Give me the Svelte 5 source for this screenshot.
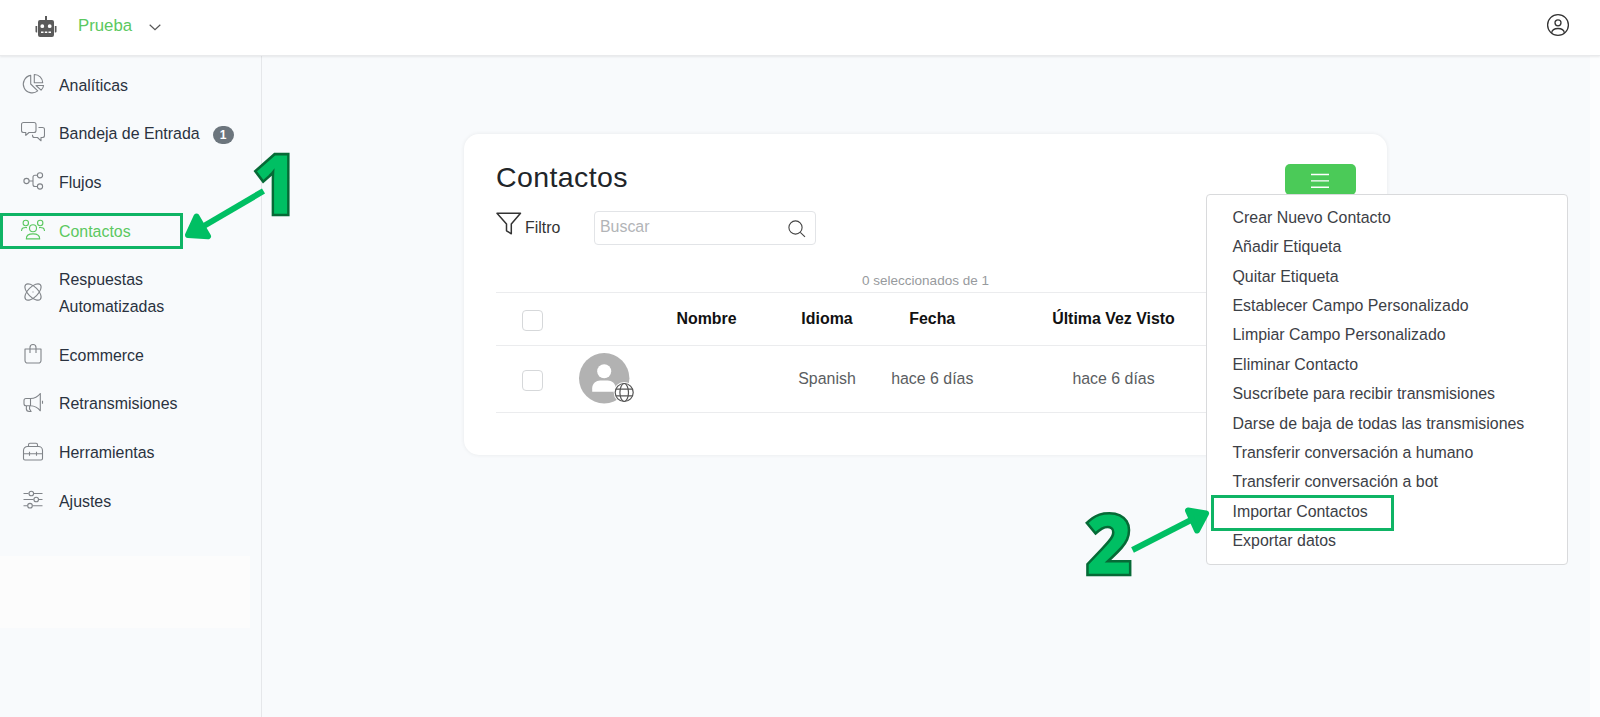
<script>
    let botName = 'Prueba';
    let search = '';

    const navItems = [
        { label: 'Analíticas', icon: 'chart' },
        { label: 'Bandeja de Entrada', icon: 'chat', badge: 1 },
        { label: 'Flujos', icon: 'flow' },
        { label: 'Contactos', icon: 'users', active: true },
        { label: 'Respuestas Automatizadas', icon: 'atom' },
        { label: 'Ecommerce', icon: 'bag' },
        { label: 'Retransmisiones', icon: 'horn' },
        { label: 'Herramientas', icon: 'case' },
        { label: 'Ajustes', icon: 'sliders' },
    ];

    const actions = [
        'Crear Nuevo Contacto',
        'Añadir Etiqueta',
        'Quitar Etiqueta',
        'Establecer Campo Personalizado',
        'Limpiar Campo Personalizado',
        'Eliminar Contacto',
        'Suscríbete para recibir transmisiones',
        'Darse de baja de todas las transmisiones',
        'Transferir conversación a humano',
        'Transferir conversación a bot',
        'Importar Contactos',
        'Exportar datos',
    ];

    let contacts = [
        { name: '', language: 'Spanish', date: 'hace 6 días', lastSeen: 'hace 6 días' },
    ];
</script>

<div class="page">
    <header class="topbar">
        <svg class="robot" width="22" height="22" viewBox="0 0 22 22">
            <path fill="#5a5a5a" fill-rule="evenodd" d="M10 0h2v4h5a2 2 0 0 1 2 2v13a2 2 0 0 1-2 2H5a2 2 0 0 1-2-2V6a2 2 0 0 1 2-2h5zM7.3 8.3a1.9 1.9 0 1 0 0 3.8 1.9 1.9 0 0 0 0-3.8zM14.7 8.3a1.9 1.9 0 1 0 0 3.8 1.9 1.9 0 0 0 0-3.8zM6 15.5v1.6h2.5v-1.6zM9.8 15.5v1.6h2.5v-1.6zM13.5 15.5v1.6H16v-1.6zM.5 10h1.7v6.5H1.5a1 1 0 0 1-1-1zM19.8 10h1.7v5.5a1 1 0 0 1-1 1h-.7z" />
        </svg>
        <span class="bot-name">{botName}</span>
        <svg class="chevron" width="12" height="7" viewBox="0 0 12 7"><path d="M.7 .8 6 5.6 11.3 .8" /></svg>
        <svg class="account" width="24" height="24" viewBox="0 0 24 24">
            <circle cx="12" cy="12" r="10.4" />
            <circle cx="12" cy="9.8" r="3" />
            <path d="M5.6 19.8c.5-3 3-4.3 6.4-4.3s5.9 1.3 6.4 4.3" />
        </svg>
    </header>

    <div class="body">
        <nav class="sidebar">
            {#each navItems as item}
                <a href="#top" class="nav-item" class:active={item.active}>
                    <svg class="nav-icon" width="24" height="24" viewBox="0 0 24 24">
                        {#if item.icon === 'chart'}
                            <path d="M9.7 3.4A8.8 8.8 0 1 0 16.7 18.9L9.7 12zM13.3 2.5v8.2h8.4A8.3 8.3 0 0 0 13.3 2.5zM15 13.5h7.6a8 8 0 0 1-2.5 4.7z" />
                        {:else if item.icon === 'chat'}
                            <path d="M2.5 1.5h10.5a2 2 0 0 1 2 2v6a2 2 0 0 1-2 2H8l-3.2 2.8V11.5H2.5a2 2 0 0 1-2-2V3.5a2 2 0 0 1 2-2z" />
                            <path d="M17.5 6.5h4a2 2 0 0 1 2 2v6a2 2 0 0 1-2 2h-1.5v3.3L16.5 16.5h-3a2 2 0 0 1-2-2v-.7" />
                        {:else if item.icon === 'flow'}
                            <circle cx="5.5" cy="12" r="2.6" />
                            <circle cx="19" cy="6.3" r="2.6" />
                            <circle cx="19" cy="17.5" r="2.6" />
                            <path d="M8 12h4M16.4 6.3H14a2 2 0 0 0-2 2v7.2a2 2 0 0 0 2 2h2.4" />
                        {:else if item.icon === 'users'}
                            <circle cx="12" cy="10.3" r="3.5" />
                            <circle cx="4.8" cy="5" r="2.7" />
                            <circle cx="19.2" cy="5" r="2.7" />
                            <path d="M5.3 20.9c0-3.6 2-5 6.7-5s6.7 1.4 6.7 5zM.5 13c.2-3 1.7-3.7 5.5-3.4M23.5 13c-.2-3-1.7-3.7-5.5-3.4" />
                        {:else if item.icon === 'atom'}
                            <ellipse cx="12" cy="12" rx="10.3" ry="5" transform="rotate(45 12 12)" />
                            <ellipse cx="12" cy="12" rx="10.3" ry="5" transform="rotate(-45 12 12)" />
                            <path d="M11.5 12h1" />
                        {:else if item.icon === 'bag'}
                            <path d="M4 7h16v11.5a2.5 2.5 0 0 1-2.5 2.5h-11A2.5 2.5 0 0 1 4 18.5zM9 11V5.5a3 3 0 0 1 6 0V11" />
                        {:else if item.icon === 'horn'}
                            <path d="M9.5 7.5H5A2 2 0 0 0 3 9.5v3.2a2 2 0 0 0 2 2h4.5zM9.5 7.5c4 0 7.5-2 9.8-5v17.3c-2.3-3-5.8-5-9.8-5.1M5.5 15l-.2 2.5c0 2 1.2 3 3 3h1.8l-1.6-2.6.2-2.9M21.5 9.8v3" />
                        {:else if item.icon === 'case'}
                            <path d="M6.5 6.5h11a4 4 0 0 1 4 4v8a1.5 1.5 0 0 1-1.5 1.5H4a1.5 1.5 0 0 1-1.5-1.5v-8a4 4 0 0 1 4-4zM7.5 6.5V4.8a1.5 1.5 0 0 1 1.5-1.5h6a1.5 1.5 0 0 1 1.5 1.5v1.7M2.5 13.8h19M8.5 11.8v4M15.5 11.8v4" />
                        {:else}
                            <path d="M2.5 5.5h5M12.5 5.5h9M2.5 11.5h10M17.5 11.5h4M2.5 17.7h4M11.5 17.7h10" />
                            <circle cx="10.3" cy="5.5" r="2.3" />
                            <circle cx="15.2" cy="11.5" r="2.3" />
                            <circle cx="9" cy="17.7" r="2.3" />
                        {/if}
                    </svg>
                    <span class="nav-label">{item.label}</span>
                    {#if item.badge}
                        <span class="badge">{item.badge}</span>
                    {/if}
                </a>
            {/each}
            <div class="nav-footer"></div>
        </nav>

        <main class="content">
            <section class="card">
                <div class="card-head">
                    <h1>Contactos</h1>
                    <div class="dropdown">
                        <button class="menu-btn" aria-label="Menu">
                            <svg width="18" height="16" viewBox="0 0 18 16"><path d="M0 1.5h18M0 7.9h18M0 14.3h18" /></svg>
                        </button>
                        <ul class="menu">
                            {#each actions as action}
                                <li>{action}</li>
                            {/each}
                        </ul>
                    </div>
                </div>

                <div class="tools">
                    <svg class="funnel" width="26" height="24" viewBox="0 0 26 24"><path d="M1 1.2h23.5L15.3 12v9.8l-4.8-3V12z" /></svg>
                    <span class="filter">Filtro</span>
                    <div class="search">
                        <input type="text" placeholder="Buscar" bind:value={search}>
                        <svg width="18" height="18" viewBox="0 0 18 18"><circle cx="7.5" cy="7.5" r="6.6" /><path d="M12.3 12.3l4.7 4.5" /></svg>
                    </div>
                </div>

                <p class="selected">0 seleccionados de {contacts.length}</p>

                <table>
                    <thead>
                        <tr>
                            <th class="w-check"><span class="checkbox"></span></th>
                            <th class="w-avatar"></th>
                            <th class="w-name">Nombre</th>
                            <th class="w-lang">Idioma</th>
                            <th class="w-date">Fecha</th>
                            <th class="w-seen">Última Vez Visto</th>
                            <th></th>
                        </tr>
                    </thead>
                    <tbody>
                        {#each contacts as contact}
                            <tr>
                                <td><span class="checkbox"></span></td>
                                <td>
                                    <svg class="avatar" width="56" height="52" viewBox="0 0 56 52">
                                        <circle cx="25.2" cy="25.3" r="25.2" fill="#b2b2b2" />
                                        <circle cx="25.2" cy="18.3" r="7" fill="#fff" />
                                        <path d="M13.2 38.8v-3.5c0-5 4-7.8 8-7.8h7.5c4 0 8 2.8 8 7.8V38.8z" fill="#fff" />
                                        <circle cx="45.2" cy="39.5" r="10.5" fill="#fff" />
                                        <g fill="none" stroke="#555" stroke-width="1.2">
                                            <circle cx="45.2" cy="39.5" r="9" />
                                            <ellipse cx="45.2" cy="39.5" rx="4.3" ry="9" />
                                            <path d="M37 36.1h16.4M37 42.9h16.4" />
                                        </g>
                                    </svg>
                                </td>
                                <td>{contact.name}</td>
                                <td>{contact.language}</td>
                                <td>{contact.date}</td>
                                <td>{contact.lastSeen}</td>
                                <td></td>
                            </tr>
                        {/each}
                    </tbody>
                </table>
            </section>
        </main>
    </div>

    <!-- tutorial marks, drawn above the page -->
    <div class="mark mark-nav"></div>
    <div class="mark mark-import"></div>
    <svg class="guide" width="1600" height="717" viewBox="0 0 1600 717">
        <g class="arrow">
            <path d="M263.5 191 203 226.5" />
            <path class="head" d="M188 235 196.5 216.5 208 236.3z" />
            <path d="M1132.5 550 1192 519.5" />
            <path class="head" d="M1206 513.5 1188 510.5 1197 530.5z" />
        </g>
        <text transform="translate(252 215) scale(.93 1)">1</text>
        <text transform="translate(1085 574.5) scale(.97 1)">2</text>
    </svg>
</div>

<style>
    :global(body) {
        background: #f8fafc;
    }

    .page {
        position: relative;
        height: 717px;
        overflow: hidden;
        display: flex;
        flex-direction: column;
        font-family: "Liberation Sans", Arial, sans-serif;
        font-size: 15.92px;
        color: #212529;
    }

    svg {
        flex: none;
        fill: none;
    }

    .topbar {
        height: 56px;
        box-sizing: border-box;
        display: flex;
        align-items: center;
        padding: 0 30px 4px 35px;
        background: #fff;
        border-bottom: 1px solid #e9eaec;
        box-shadow: 0 1px 2px rgba(0, 0, 0, 0.08);
        z-index: 1;
    }

    .robot {
        margin-top: 3px;
    }

    .bot-name {
        margin-left: 21px;
        color: #5bc860;
        font-size: 16.8px;
    }

    .chevron {
        margin: 3px 0 0 17px;
        stroke: #555;
        stroke-width: 1.2;
    }

    .account {
        margin: -1px 0 0 auto;
        stroke: #333;
        stroke-width: 1.3;
    }

    .body {
        flex: 1;
        display: flex;
    }

    .sidebar {
        width: 262px;
        box-sizing: border-box;
        border-right: 1px solid #e5e7ea;
        padding-top: 16.7px;
    }

    .nav-item {
        display: flex;
        align-items: center;
        padding-left: 21px;
        margin-bottom: 21.7px;
        line-height: 26.95px;
        color: #2a3240;
        text-decoration: none;
    }

    .nav-icon {
        margin: -4px 14px 0 0;
        stroke: #808489;
        stroke-width: 1.1;
        stroke-linejoin: round;
    }

    .nav-label {
        max-width: 144px;
    }

    .active {
        color: #5bc860;
    }

    .active .nav-icon {
        stroke: #5bc860;
    }

    .nav-footer {
        width: 250px;
        height: 72px;
        margin-top: 40px;
        background: #fcfcfc;
    }

    .badge {
        margin-left: 13px;
        width: 21px;
        height: 18px;
        line-height: 18px;
        border-radius: 9px;
        background: #6c757d;
        color: #fff;
        font-size: 12px;
        font-weight: bold;
        text-align: center;
    }

    .content {
        flex: 1;
        padding: 78px 0 0 202px;
        border-right: 10px solid #fcfdfe;
    }

    .card {
        width: 923px;
        height: 321px;
        box-sizing: border-box;
        padding: 27px 32px;
        background: #fff;
        border-radius: 15px;
        box-shadow: 0 0 4px rgba(0, 0, 0, 0.07);
    }

    .card-head {
        display: flex;
        justify-content: space-between;
    }

    h1 {
        margin: 0;
        font-size: 28.5px;
        letter-spacing: 0.4px;
        font-weight: normal;
        line-height: 33px;
    }

    .dropdown {
        position: relative;
        height: 33px;
        margin-top: 3px;
    }

    .menu-btn {
        width: 71px;
        height: 31px;
        padding: 2px 2px 0 0;
        margin-right: -1px;
        border: 0;
        border-radius: 5px;
        background: #4bca58;
        display: flex;
        align-items: center;
        justify-content: center;
    }

    .menu-btn svg {
        stroke: #fff;
        stroke-width: 1.4;
    }

    .menu {
        position: absolute;
        top: 30px;
        right: -213px;
        width: 362px;
        height: 371px;
        box-sizing: border-box;
        margin: 0;
        padding: 8px 0 0 25.5px;
        list-style: none;
        background: #fff;
        border: 1px solid #d9dadc;
        border-radius: 4px;
        color: #3c4046;
    }

    .menu li {
        line-height: 29.36px;
        white-space: nowrap;
    }

    .tools {
        display: flex;
        height: 34px;
        margin-top: 14px;
        align-items: flex-start;
    }

    .funnel {
        margin-top: 1px;
        stroke: #333;
        stroke-width: 1.5;
        stroke-linejoin: round;
    }

    .filter {
        width: 68.5px;
        padding-left: 3px;
        line-height: 33px;
        color: #333;
    }

    .search {
        width: 222px;
        height: 34px;
        box-sizing: border-box;
        display: flex;
        align-items: center;
        border: 1px solid #e2e4e7;
        border-radius: 4px;
        padding: 0 9px 0 5.5px;
    }

    .search input {
        flex: 1;
        min-width: 0;
        border: 0;
        padding: 0 0 3px;
        outline: none;
        font: inherit;
        background: none;
    }

    .search input::placeholder {
        color: #b2b4b7;
    }

    .search svg {
        margin-top: 2px;
        stroke: #444;
        stroke-width: 1.1;
    }

    .selected {
        margin: 28px 0 0;
        height: 18.5px;
        line-height: 16px;
        text-align: center;
        font-size: 13.5px;
        color: #979a9d;
    }

    table {
        width: 859px;
        table-layout: fixed;
        border-collapse: collapse;
        text-align: center;
    }

    th,
    td {
        padding: 0;
        border-top: 1px solid #ebecee;
        border-bottom: 1px solid #ebecee;
    }

    th {
        height: 52px;
        color: #111;
    }

    td {
        height: 66.5px;
        color: #5a5d61;
    }

    .w-check { width: 72px; }
    .w-avatar { width: 72px; }
    .w-name { width: 133px; }
    .w-lang { width: 108px; }
    .w-date { width: 102.5px; }
    .w-seen { width: 260px; }

    .checkbox {
        display: block;
        width: 21px;
        height: 21px;
        box-sizing: border-box;
        margin: 3px auto 0;
        border: 1px solid #d6d8da;
        border-radius: 4px;
    }

    .avatar {
        display: block;
        margin-left: 11px;
    }

    .mark {
        position: absolute;
        box-sizing: border-box;
        border: 3px solid #0fb465;
        z-index: 2;
    }

    .mark-nav {
        left: 0;
        top: 213px;
        width: 183px;
        height: 36px;
    }

    .mark-import {
        left: 1211px;
        top: 495px;
        width: 183px;
        height: 36px;
    }

    .guide {
        position: absolute;
        left: 0;
        top: 0;
        z-index: 3;
        pointer-events: none;
    }

    .arrow {
        stroke: #00bf63;
        stroke-width: 6;
        stroke-linejoin: round;
    }

    .arrow .head {
        fill: #00bf63;
    }

    .guide text {
        fill: #00bf63;
        stroke: #066a36;
        stroke-width: 2.6;
        font: 800 85px "Open Sans", sans-serif;
    }
</style>
